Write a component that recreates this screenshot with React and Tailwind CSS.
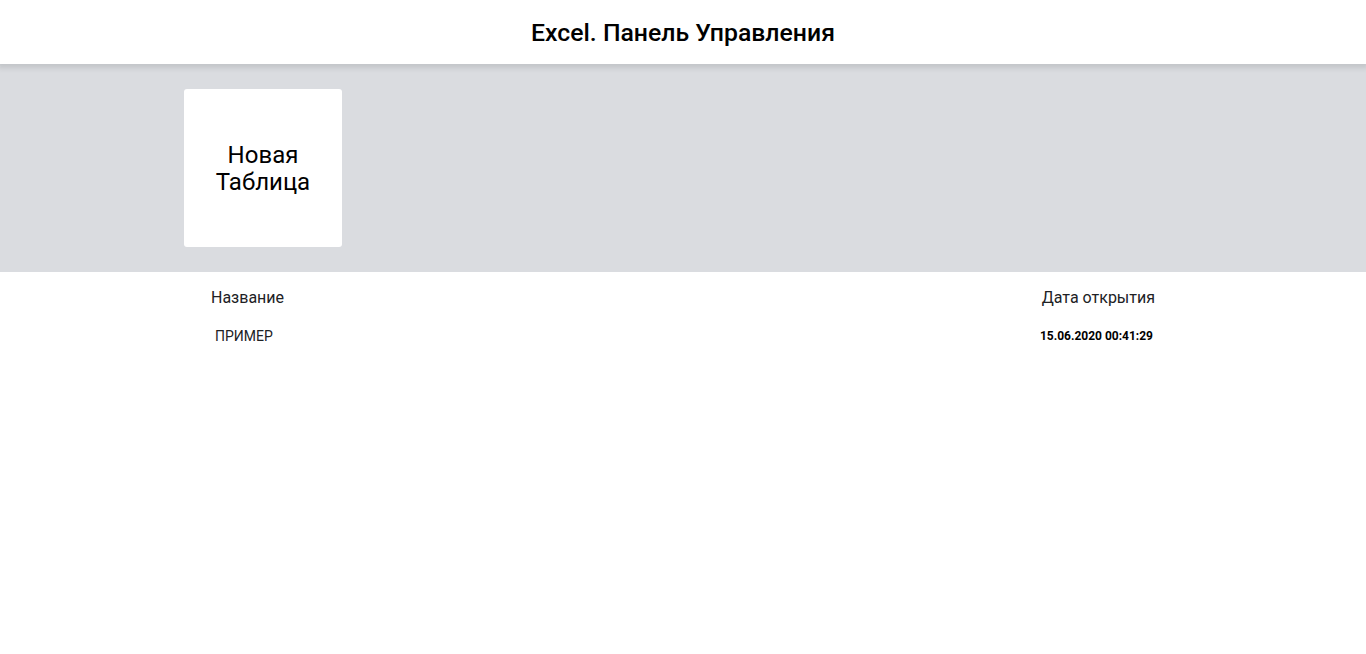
import React from 'react';

export default function App() {
    const records = [
        { name: 'ПРИМЕР', date: '15.06.2020 00:41:29' },
    ];

    return (
        <div className="min-h-[654px] bg-white font-['Roboto',sans-serif] text-[#202124]">
            <header className="relative z-10 h-16 flex items-center justify-center bg-white shadow-[0_2px_5px_2px_rgba(60,64,67,0.15)]">
                <h1 className="text-[24.8px] leading-8 pt-[2px] font-medium text-black">Excel. Панель Управления</h1>
            </header>

            <section className="bg-[#dadce0] h-52">
                <div className="w-[998px] mx-auto pt-[25px]">
                    <a
                        href="#"
                        className="w-[158px] h-[158px] bg-white rounded-[3px] flex items-center justify-center text-center text-2xl leading-[27px] pt-[2px] text-black"
                    >
                        Новая
                        <br />
                        Таблица
                    </a>
                </div>
            </section>

            <section className="w-[998px] mx-auto">
                <div className="flex justify-between px-[27px] pt-[14px] pb-[14px] text-base">
                    <span>Название</span>
                    <span>Дата открытия</span>
                </div>
                <ul>
                    {records.map((r) => (
                        <li key={r.name} className="flex justify-between items-center pl-[31px] pr-[29px] py-[2px]">
                            <a href="#" className="text-sm text-[#202124]">{r.name}</a>
                            <strong className="text-xs text-black">{r.date}</strong>
                        </li>
                    ))}
                </ul>
            </section>
        </div>
    );
}
